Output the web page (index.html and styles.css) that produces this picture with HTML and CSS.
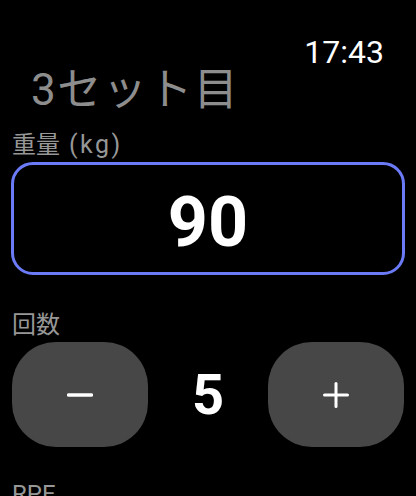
FILE: index.html
```html
<!DOCTYPE html>
<html lang="ja">
<head>
<meta charset="utf-8">
<title>3セット目</title>
<link rel="stylesheet" href="styles.css">
</head>
<body>
<div class="screen">
  <header class="status">
    <span class="time">17:43</span>
  </header>
  <h1 class="title">3セット目</h1>

  <section class="field">
    <div class="label">重量 <span class="unit">(kg)</span></div>
    <div class="weight-box">90</div>
  </section>

  <section class="field field-reps">
    <div class="label">回数</div>
    <div class="stepper">
      <button class="step-btn" aria-label="減らす">
        <svg width="26" height="26" viewBox="0 0 26 26"><line x1="1.5" y1="13" x2="24.5" y2="13" stroke="#fff" stroke-width="3.4" stroke-linecap="round"/></svg>
      </button>
      <span class="reps">5</span>
      <button class="step-btn" aria-label="増やす">
        <svg width="26" height="26" viewBox="0 0 26 26"><line x1="1.5" y1="13" x2="24.5" y2="13" stroke="#fff" stroke-width="3" stroke-linecap="round"/><line x1="13" y1="1.5" x2="13" y2="24.5" stroke="#fff" stroke-width="3" stroke-linecap="round"/></svg>
      </button>
    </div>
  </section>

  <section class="field field-rpe">
    <div class="label">RPE</div>
  </section>
</div>
</body>
</html>
```

FILE: styles.css
```css
* {
  box-sizing: border-box;
}

html, body {
  margin: 0;
  padding: 0;
  background: #000;
}

body {
  font-family: "Roboto", "Noto Sans CJK JP", sans-serif;
  color: #fff;
  width: 416px;
  height: 496px;
  overflow: hidden;
}

.screen {
  padding: 0 11px;
}

.status {
  display: flex;
  justify-content: flex-end;
  height: 68px;
  padding: 36px 21px 0 0;
}

.time {
  font-size: 32px;
  line-height: 32px;
  font-weight: 400;
  color: #fff;
}

.title {
  margin: 0;
  padding-left: 20px;
  font-size: 44px;
  line-height: 44px;
  font-weight: 400;
  letter-spacing: 1.5px;
  color: #8d8d8d;
}

.field {
  margin-top: 21px;
}

.field-reps {
  margin-top: 38px;
}

.field-rpe {
  margin-top: 35px;
}

.label {
  font-size: 24px;
  line-height: 24px;
  color: #979797;
  padding-left: 1px;
  margin-bottom: 5px;
}

.unit {
  font-size: 25px;
  letter-spacing: 2.5px;
  margin-left: 3px;
}

.weight-box {
  height: 113px;
  border: 3px solid #6b7af6;
  border-radius: 22px;
  display: flex;
  align-items: center;
  justify-content: center;
  padding-top: 6px;
  font-size: 70px;
  line-height: 70px;
  font-weight: 700;
  color: #fff;
}

.stepper {
  display: grid;
  grid-template-columns: 136px 1fr 136px;
  align-items: center;
  padding: 0 1px;
}

.step-btn {
  height: 105px;
  border: none;
  border-radius: 44px;
  background: #474747;
  display: flex;
  align-items: center;
  justify-content: center;
  padding: 0;
}

.step-btn svg {
  display: block;
}

.reps {
  text-align: center;
  font-size: 56px;
  line-height: 56px;
  font-weight: 700;
  color: #fff;
}
```
